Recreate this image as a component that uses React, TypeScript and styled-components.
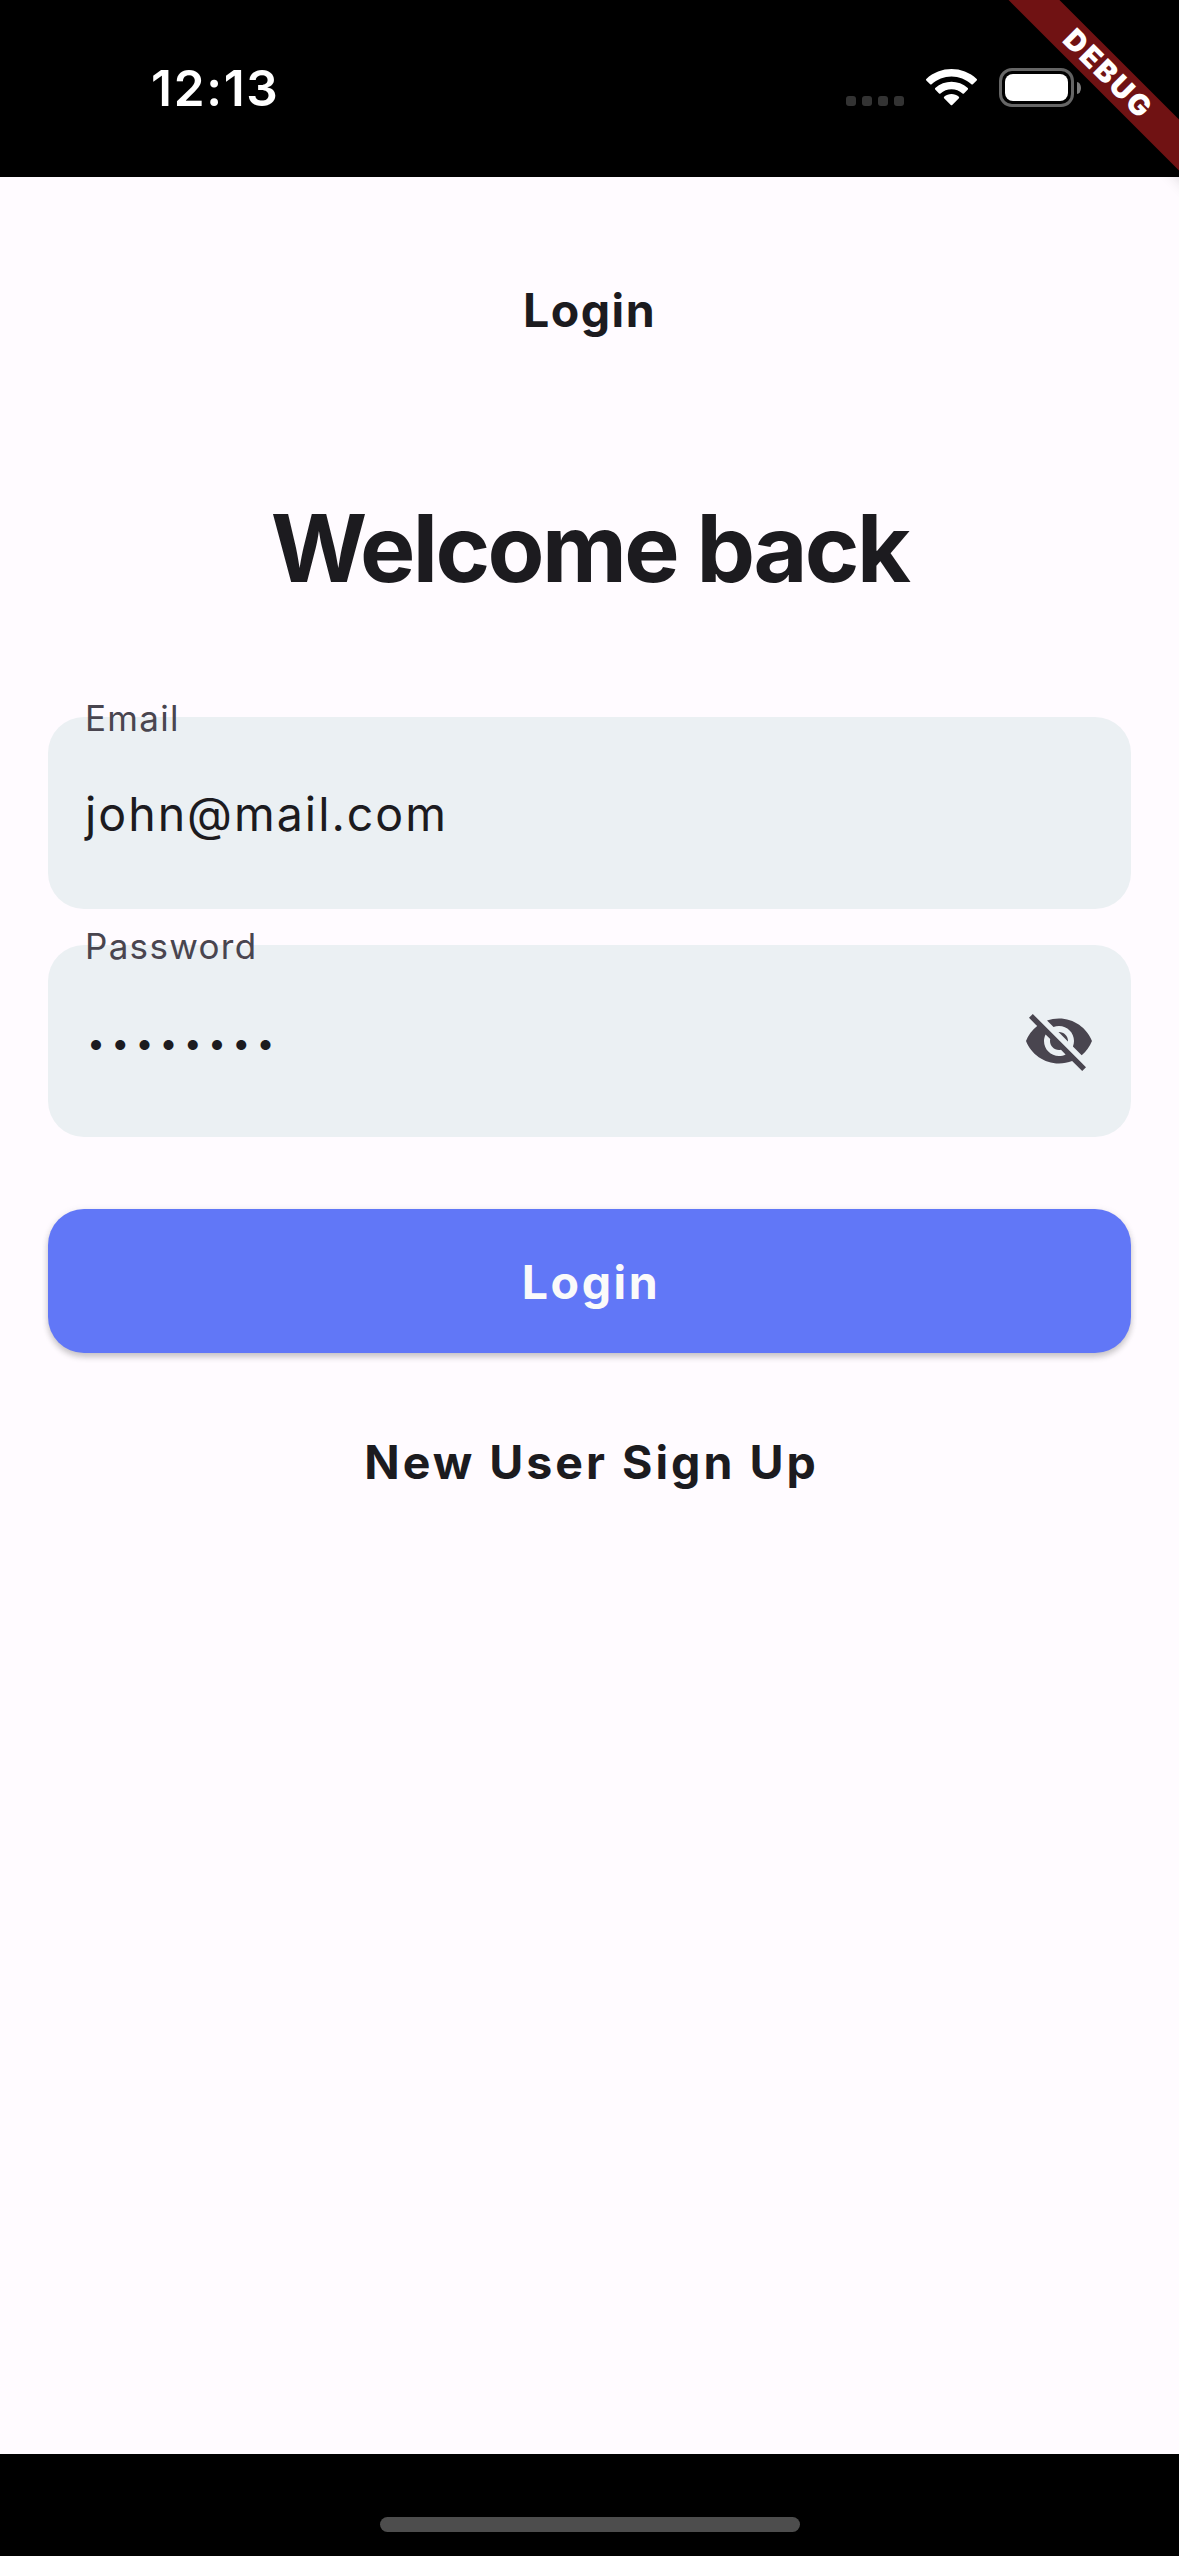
import React from "react";
import styled, { createGlobalStyle } from "styled-components";
import { MdVisibilityOff } from "react-icons/md";

const GlobalStyle = createGlobalStyle`
  *, *::before, *::after { box-sizing: border-box; }
  html, body { margin: 0; padding: 0; background: #000; }
  body { font-family: Inter, Roboto, "Liberation Sans", sans-serif; }
`;

const ink = "#1c1b1f";

const Screen = styled.div`
  position: relative;
  display: flex;
  flex-direction: column;
  width: 1179px;
  height: 2556px;
  overflow: hidden;
  background: #fffbff;
`;

const StatusBar = styled.header`
  display: flex;
  align-items: center;
  justify-content: space-between;
  flex: none;
  height: 177px;
  padding: 0 98px 2px 151px;
  background: #000;
`;

const Clock = styled.time`
  color: #fff;
  font-size: 49.5px;
  font-weight: 600;
  line-height: 60px;
  letter-spacing: 1.7px;
`;

const StatusIcons = styled.div`
  display: flex;
  align-items: center;
`;

const SignalDots = styled.div`
  display: flex;
  gap: 6px;
  margin: 27px 22px 0 0;
`;

const SignalDot = styled.span`
  width: 10px;
  height: 10px;
  border-radius: 3px;
  background: #333;
`;

const WifiIcon = styled.svg`
  display: block;
  width: 51px;
  height: 37px;
  margin-right: 22px;
`;

const BatteryShell = styled.div`
  width: 75px;
  height: 39px;
  padding: 3px;
  border: 3px solid #666;
  border-radius: 13px;
`;

const BatteryCharge = styled.div`
  height: 100%;
  border-radius: 8px;
  background: #fff;
`;

const BatteryCap = styled.div`
  width: 4px;
  height: 12px;
  margin-left: 3px;
  border-radius: 0 4px 4px 0 / 0 6px 6px 0;
  background: #808080;
`;

const Ribbon = styled.div`
  position: absolute;
  top: 53.5px;
  left: 955.5px;
  z-index: 2;
  display: flex;
  align-items: center;
  justify-content: center;
  width: 300px;
  height: 36px;
  padding-left: 6px;
  transform: rotate(45deg);
  background: #701213;
  box-shadow: 0 0 18px rgba(0, 0, 0, 0.3);
  color: #fff;
  font-size: 29px;
  font-weight: 900;
  line-height: 36px;
  letter-spacing: 2.4px;
`;

const Content = styled.main`
  display: flex;
  flex: 1;
  flex-direction: column;
  padding: 0 48px;
`;

const PageTitle = styled.h2`
  margin: 103px 0 0;
  color: ${ink};
  font-size: 46.5px;
  font-weight: 700;
  line-height: 60px;
  letter-spacing: 1.5px;
  text-align: center;
`;

const Heading = styled.h1`
  margin: 150px 0 0;
  color: ${ink};
  font-size: 93px;
  font-weight: 700;
  line-height: 116px;
  letter-spacing: -2.6px;
  text-align: center;
`;

const Form = styled.form`
  display: flex;
  flex-direction: column;
  margin-top: 111px;
`;

const Field = styled.label`
  position: relative;
  display: flex;
  align-items: center;
  justify-content: space-between;
  height: 192px;
  margin-bottom: 36px;
  padding: 0 36px 0 37px;
  border-radius: 36px;
  background: #ebf0f3;
`;

const FieldLabel = styled.span`
  position: absolute;
  top: -20px;
  left: 37px;
  color: #49454f;
  font-size: 35px;
  font-weight: 400;
  line-height: 42px;
  letter-spacing: 1.3px;
`;

const FieldValue = styled.span`
  padding-top: 2px;
  color: ${ink};
  font-size: 46.5px;
  line-height: 60px;
  letter-spacing: 2px;
`;

const MaskedValue = styled.span`
  padding: 3px 0 0 2px;
  color: ${ink};
  font-size: 32px;
  line-height: 40px;
  letter-spacing: 6.2px;
`;

const HideIcon = styled(MdVisibilityOff)`
  display: block;
  width: 72px;
  height: 72px;
  color: #49454f;
`;

const SubmitButton = styled.button`
  height: 144px;
  margin: 36px 0 0;
  padding: 2px 0 0 3px;
  border: 0;
  border-radius: 36px;
  background: #6177f7;
  box-shadow:
    0 4px 6px 0 rgba(0, 0, 0, 0.2),
    0 1px 9px 0 rgba(0, 0, 0, 0.06);
  color: #fafafa;
  font-family: inherit;
  font-size: 46.5px;
  font-weight: 700;
  line-height: 60px;
  letter-spacing: 2.6px;
`;

const SignUpLink = styled.a`
  margin-top: 79px;
  padding-left: 4px;
  color: ${ink};
  font-size: 46.5px;
  font-weight: 700;
  line-height: 60px;
  letter-spacing: 3px;
  text-align: center;
`;

const HomeArea = styled.footer`
  display: flex;
  flex: none;
  justify-content: center;
  height: 102px;
  padding-top: 63px;
  background: #000;
`;

const HomeIndicator = styled.div`
  width: 420px;
  height: 15px;
  border-radius: 8px;
  background: #4d4d4d;
`;

function Wifi() {
  return (
    <WifiIcon viewBox="0 0 17 12.33" fill="#fff" aria-label="Wi-Fi">
      <path d="M8.5 2.5C10.97 2.5 13.34 3.43 15.13 5.1C15.26 5.23 15.48 5.23 15.61 5.1L16.9 3.8C17.04 3.66 17.03 3.45 16.9 3.32C12.2 -1.1 4.8 -1.1 0.1 3.32C-0.03 3.45 -0.04 3.66 0.1 3.8L1.39 5.1C1.52 5.23 1.74 5.23 1.87 5.1C3.66 3.43 6.03 2.5 8.5 2.5Z" />
      <path d="M8.5 6.75C9.85 6.75 11.16 7.25 12.17 8.16C12.3 8.29 12.52 8.28 12.65 8.15L13.94 6.85C14.07 6.71 14.07 6.49 13.93 6.35C10.87 3.53 6.13 3.53 3.07 6.35C2.93 6.49 2.93 6.71 3.07 6.85L4.35 8.15C4.49 8.28 4.7 8.29 4.83 8.16C5.84 7.25 7.15 6.75 8.5 6.75Z" />
      <path d="M10.97 9.75C11.1 9.62 11.1 9.4 10.96 9.27C9.55 8.04 7.45 8.04 6.04 9.27C5.9 9.4 5.9 9.62 6.03 9.75L8.26 12.02C8.39 12.15 8.61 12.15 8.74 12.02L10.97 9.75Z" />
    </WifiIcon>
  );
}

export default function App() {
  return (
    <>
      <GlobalStyle />
      <Screen>
        <StatusBar>
          <Clock>12:13</Clock>
          <StatusIcons>
            <SignalDots>
              <SignalDot />
              <SignalDot />
              <SignalDot />
              <SignalDot />
            </SignalDots>
            <Wifi />
            <BatteryShell>
              <BatteryCharge />
            </BatteryShell>
            <BatteryCap />
          </StatusIcons>
        </StatusBar>
        <Content>
          <PageTitle>Login</PageTitle>
          <Heading>Welcome back</Heading>
          <Form>
            <Field>
              <FieldLabel>Email</FieldLabel>
              <FieldValue>john@mail.com</FieldValue>
            </Field>
            <Field>
              <FieldLabel>Password</FieldLabel>
              <MaskedValue>••••••••</MaskedValue>
              <HideIcon />
            </Field>
            <SubmitButton type="button">Login</SubmitButton>
          </Form>
          <SignUpLink>New User Sign Up</SignUpLink>
        </Content>
        <HomeArea>
          <HomeIndicator />
        </HomeArea>
        <Ribbon>DEBUG</Ribbon>
      </Screen>
    </>
  );
}
